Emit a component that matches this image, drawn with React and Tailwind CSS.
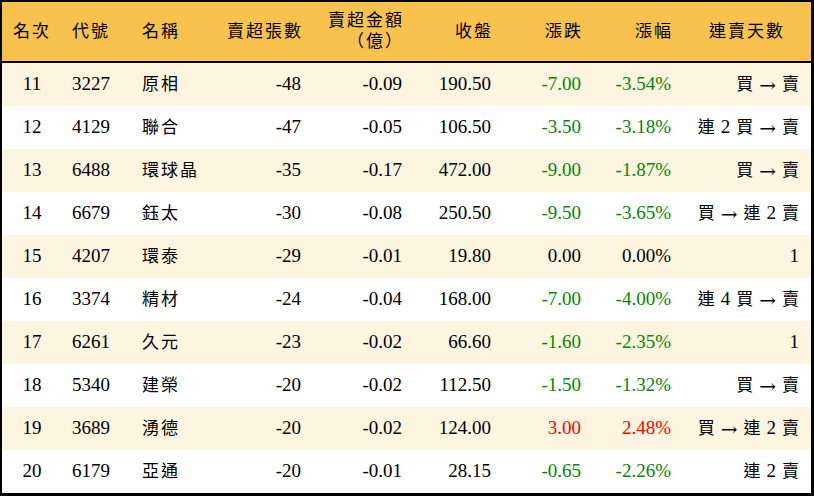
const rows = [
  ['11', '3227', '原相', '-48', '-0.09', '190.50', '-7.00', '-3.54%', '買 → 賣'],
  ['12', '4129', '聯合', '-47', '-0.05', '106.50', '-3.50', '-3.18%', '連 2 買 → 賣'],
  ['13', '6488', '環球晶', '-35', '-0.17', '472.00', '-9.00', '-1.87%', '買 → 賣'],
  ['14', '6679', '鈺太', '-30', '-0.08', '250.50', '-9.50', '-3.65%', '買 → 連 2 賣'],
  ['15', '4207', '環泰', '-29', '-0.01', '19.80', '0.00', '0.00%', '1'],
  ['16', '3374', '精材', '-24', '-0.04', '168.00', '-7.00', '-4.00%', '連 4 買 → 賣'],
  ['17', '6261', '久元', '-23', '-0.02', '66.60', '-1.60', '-2.35%', '1'],
  ['18', '5340', '建榮', '-20', '-0.02', '112.50', '-1.50', '-1.32%', '買 → 賣'],
  ['19', '3689', '湧德', '-20', '-0.02', '124.00', '3.00', '2.48%', '買 → 連 2 賣'],
  ['20', '6179', '亞通', '-20', '-0.01', '28.15', '-0.65', '-2.26%', '連 2 賣'],
];

const cols = 'grid grid-cols-[60px_70px_68px_113px_101px_89px_90px_90px_128px]';

function tone(v) {
  if (v.startsWith('-')) return 'text-[#008a00]';
  if (v === '0.00' || v === '0.00%') return 'text-black';
  return 'text-[#ff0000]';
}

// tokens of the streak text: digits stay serif, the arrow is a long one
function Streak({ text }) {
  return (
    <span className="inline-flex items-center justify-end gap-[6px]">
      {text.split(' ').map((t, i) => {
        if (t === '→')
          return (
            <span key={i} className="text-[20px]" style={{ fontFamily: '"DejaVu Serif", serif' }}>
              →
            </span>
          );
        if (/\d/.test(t)) return <span key={i} className="text-[19px]">{t}</span>;
        return <span key={i} className="text-[17px]">{t}</span>;
      })}
    </span>
  );
}

export default function App() {
  return (
    <div
      className="w-[814px] h-[496px] overflow-hidden bg-white text-black border-t-2 border-l-2 border-r-[3px] border-b-[3px] border-black"
      style={{ fontFamily: '"Liberation Serif", "Noto Sans CJK TC", serif' }}
    >
      <div className={`${cols} h-[61px] bg-[#f8c24e] border-b-2 border-black text-[17px] tracking-[2px] items-center`}>
        <div className="text-center">名次</div>
        <div className="pl-[10px]">代號</div>
        <div className="pl-[10px]">名稱</div>
        <div className="text-right pr-[10px]">賣超張數</div>
        <div className="flex flex-col items-end pr-[10px] leading-[21px] -mt-[2px]">
          <span>賣超金額</span>
          <span>（億）</span>
        </div>
        <div className="text-right pr-[10px]">收盤</div>
        <div className="text-right pr-[10px]">漲跌</div>
        <div className="text-right pr-[10px]">漲幅</div>
        <div className="text-center">連賣天數</div>
      </div>
      {rows.map((r, i) => (
        <div
          key={r[0]}
          className={`${cols} h-[43px] items-center text-[19px] ${i % 2 === 0 ? 'bg-[#fef5e1]' : 'bg-white'}`}
        >
          <div className="text-center">{r[0]}</div>
          <div className="pl-[10px]">{r[1]}</div>
          <div className="pl-[10px] text-[17px] tracking-[2px]">{r[2]}</div>
          <div className="text-right pr-[12px]">{r[3]}</div>
          <div className="text-right pr-[12px]">{r[4]}</div>
          <div className="text-right pr-[12px]">{r[5]}</div>
          <div className={`text-right pr-[12px] ${tone(r[6])}`}>{r[6]}</div>
          <div className={`text-right pr-[12px] ${tone(r[7])}`}>{r[7]}</div>
          <div className="flex justify-end pr-[12px]">
            <Streak text={r[8]} />
          </div>
        </div>
      ))}
    </div>
  );
}
